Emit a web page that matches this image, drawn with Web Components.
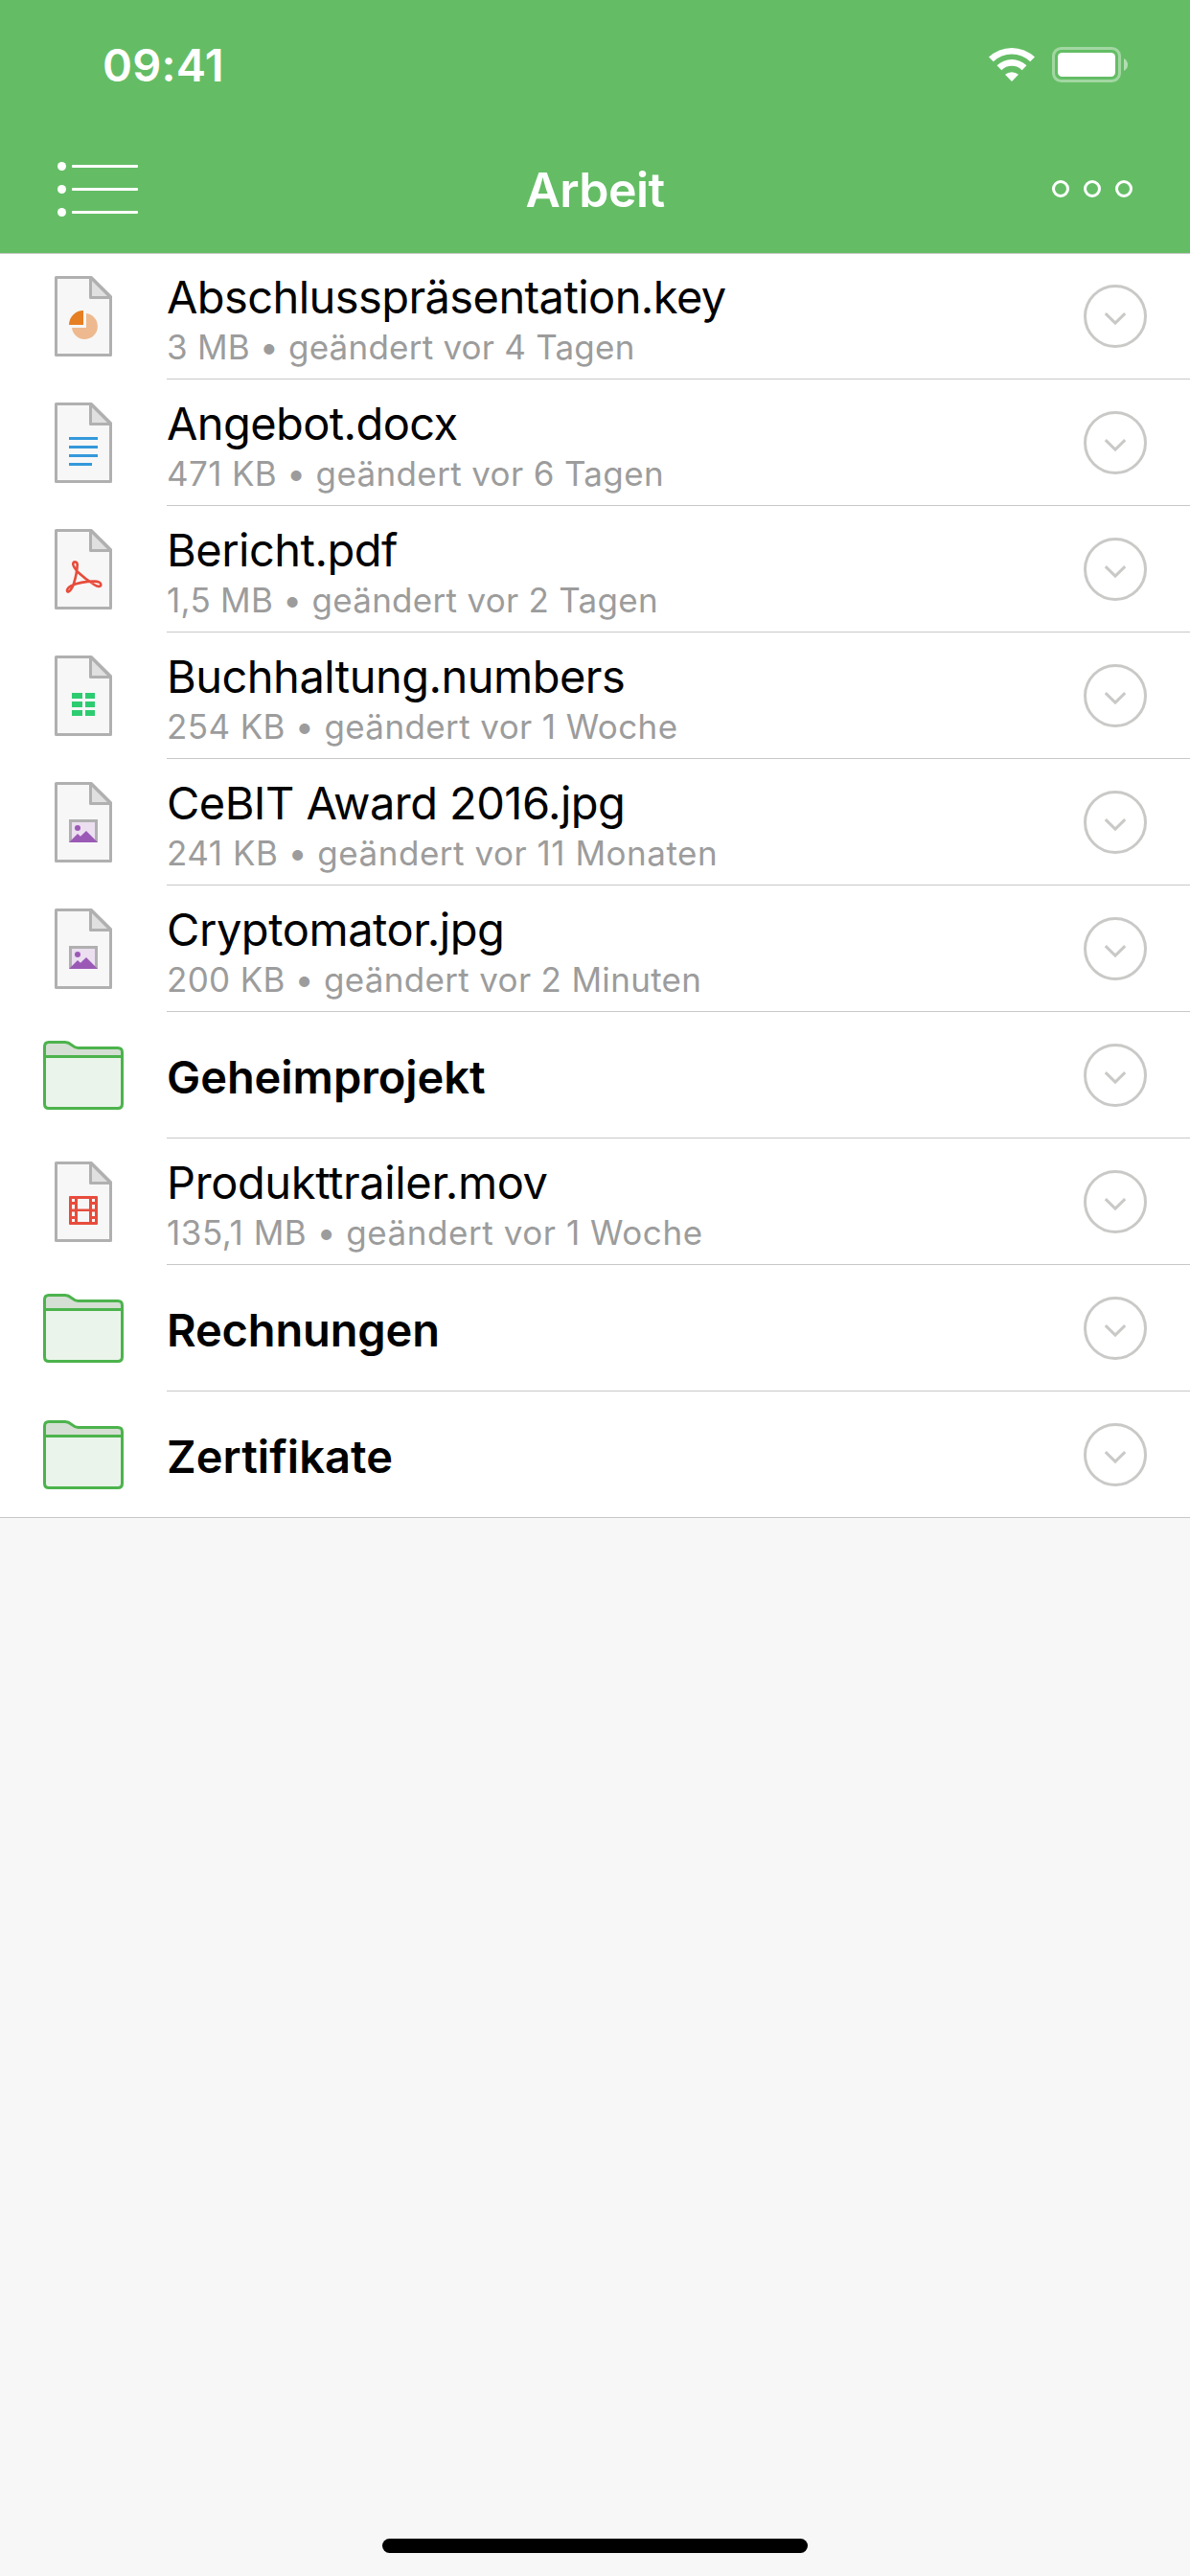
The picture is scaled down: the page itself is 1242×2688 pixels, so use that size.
<!DOCTYPE html>
<html lang="de"><head><meta charset="utf-8"><title>Arbeit</title>
<style>
html,body{margin:0;padding:0;background:#f7f7f7}
body{font-family:Inter,"Liberation Sans",sans-serif}
</style></head><body>
<cloud-app></cloud-app>
<script>
// Registers an element whose shadow root is filled from a function of its host.
const define=(name,render)=>customElements.define(name,class extends HTMLElement{
  connectedCallback(){
    if(this.shadowRoot)return;
    this.attachShadow({mode:'open'}).innerHTML=render(this);
  }
});

const glyphs={
  key:'<path fill="#e67e22" d="M30 36V51H15A15 15 0 0 1 30 36Z"/><path fill="#eeb98e" d="M33 39A13.5 13.5 0 1 1 18 54H33Z"/>',
  doc:'<path fill="#3498db" d="M15 36h30v3H15zM15 45h30v3H15zM15 54h30v3H15zM15 63h24v3H15z"/>',
  pdf:'<path fill="none" stroke="#e74c3c" stroke-width="2.600" stroke-linejoin="round" d="M24.300 45C22 42 18.500 38.500 19.300 35.800C20.200 33.400 23.800 34.200 23.700 37.600C23.500 42 21.700 51.500 20 57C18.400 61.800 15.500 65.800 13.800 65.600C12 65 13.500 61 17 59.300C23 56.500 34 54.600 41 54.600C46 54.500 48.600 56 48.300 58.200C48 60.300 45 60.400 42 58.500C36 54.800 28.500 49 24.300 45Z"/>',
  table:'<path fill="#2ecc71" d="M18 39h11v6H18zM32 39h10v6H32zM18 48h11v6H18zM32 48h10v6H32zM18 57h11v6H18zM32 57h10v6H32z"/>',
  image:'<path fill="#b0b0b0" d="M15 39h30v24H15z"/><path fill="#ebdff0" d="M18 42h24v21H18z"/><circle cx="24" cy="48" r="3" fill="#9b59b6"/><path fill="#9b59b6" d="M15 63L24 54L27 56.700L33 51L45 63Z"/>',
  film:'<rect x="15" y="36" width="30" height="30" rx="1" fill="#e74c3c"/><path fill="#f7f7f7" d="M18 39h3v3h-3zM18 45h3v4.500h-3zM18 52.500h3v4.500h-3zM18 60h3v3h-3zM39 39h3v3h-3zM39 45h3v4.500h-3zM39 52.500h3v4.500h-3zM39 60h3v3h-3zM24 39h12v10.500H24zM24 52h12v11H24z"/>'
};

define('file-icon',host=>{
  const k=host.getAttribute('kind');
  return `<style>:host{display:flex;width:84px;justify-content:center}svg{display:block}</style>`+(k==='folder'
   ?`<svg width="84" height="72" viewBox="0 0 84 72"><path fill="#d5dfd4" d="M1.500 16.500V6Q1.500 1.500 6 1.500H23C29.500 1.500 30.500 7.500 36.500 7.500H78Q82.500 7.500 82.500 12V16.500Z"/><path fill="#eaf4ea" d="M1.500 16.500H82.500V66Q82.500 70.500 78 70.500H6Q1.500 70.500 1.500 66Z"/><path fill="none" stroke="#4cb34c" stroke-width="3" d="M1.500 16.500H82.500M6 1.500H23C29.500 1.500 30.500 7.500 36.500 7.500H78Q82.500 7.500 82.500 12V66Q82.500 70.500 78 70.500H6Q1.500 70.500 1.500 66V6Q1.500 1.500 6 1.500Z"/></svg>`
   :`<svg width="60" height="84" viewBox="0 0 60 84"><path fill="#f7f7f7" stroke="#b0b0b0" stroke-width="3" stroke-linejoin="round" d="M1.500 1.500H38.400L58.500 21.600V82.500H1.500Z"/><path fill="#e0e0e0" stroke="#b0b0b0" stroke-width="3" stroke-linejoin="round" d="M37.500 1.500V22.500H58.500Z"/>${glyphs[k]}</svg>`);
});

define('row-action',()=>`<style>:host{display:block;width:66px;height:66px}svg{display:block}</style>
<svg width="66" height="66" viewBox="0 0 66 66" fill="none" stroke="#c9cac7" stroke-width="3"><circle cx="33" cy="33" r="31.500"/><path d="M22.800 30.100L33 40.100L43.200 30.100"/></svg>`);

define('file-row',host=>`<style>
:host{display:flex;box-sizing:border-box;height:132px;padding-left:45px;background:#fff}
:host(:last-of-type){box-shadow:inset 0 -1px #c8c8c8}
file-icon{align-self:center;margin-right:45px}
.main{flex:1;display:flex;align-items:center;padding-right:45px;border-bottom:1px solid #c8c8c8}
.text{flex:1;display:flex;flex-direction:column;white-space:nowrap;padding-top:7px}
.name{font-size:47px;line-height:56px;color:#000;letter-spacing:var(--name-track,0)}
.meta{font-size:35px;line-height:44px;margin-top:2px;color:#9c9c9c;letter-spacing:var(--meta-track,0)}
row-action{margin-top:1px}
:host([kind=folder]) .name{font-weight:600}
:host([kind=folder]) .text{padding-top:5px}
:host([kind=folder]) .meta{display:none}
</style><file-icon kind="${host.getAttribute('kind')}"></file-icon><div class="main"><div class="text"><span class="name"><slot></slot></span><span class="meta"><slot name="meta"></slot></span></div><row-action></row-action></div>`);

define('status-bar',()=>`<style>
:host{display:flex;box-sizing:border-box;height:132px;padding:40px 64px 0 107px;justify-content:space-between;align-items:flex-start;color:#fff}
.time{font-size:47px;line-height:56px;font-weight:600;letter-spacing:.25px}
.icons{display:flex;gap:18px;padding-top:9px}
svg{display:block}
</style><span class="time">09:41</span><div class="icons">
<svg width="48" height="37" viewBox="0 0 48 37" fill="#fff"><path d="M0 10.600A34.500 34.500 0 0 1 48 10.600L43.200 15.300A27.500 27.500 0 0 0 4.800 15.300Z"/><path d="M8.500 19.300A22.300 22.300 0 0 1 39.500 19.300L34.700 24.200A15.300 15.300 0 0 0 13.300 24.200Z"/><path d="M17 28.800A10.500 10.500 0 0 1 31 28.800L24 36Z"/></svg>
<svg width="80" height="37" viewBox="0 0 80 37"><rect x="1.500" y="1.500" width="69" height="34" rx="8" fill="none" stroke="#fff" stroke-opacity=".4" stroke-width="3"/><rect x="6" y="6" width="60" height="25" rx="4.500" fill="#fff"/><path d="M75 12Q79 14.500 79 18.500T75 25Z" fill="#fff" fill-opacity=".5"/></svg></div>`);

define('nav-bar',()=>`<style>
:host{display:grid;grid-template-columns:1fr auto 1fr;align-items:center;box-sizing:border-box;height:132px;padding:0 60px 1px;color:#fff}
.title{font-size:50px;line-height:60px;font-weight:600;letter-spacing:-.55px}
svg{display:block}
.more{justify-self:end;margin-bottom:1px}
</style>
<svg width="84" height="57" viewBox="0 0 84 57" fill="#fff"><circle cx="4.500" cy="4.500" r="4.500"/><circle cx="4.500" cy="28.500" r="4.500"/><circle cx="4.500" cy="52.500" r="4.500"/><rect x="15" y="3" width="69" height="3" rx="1"/><rect x="15" y="27" width="69" height="3" rx="1"/><rect x="15" y="51" width="69" height="3" rx="1"/></svg>
<span class="title"><slot></slot></span>
<svg class="more" width="84" height="18" viewBox="0 0 84 18" fill="none" stroke="#fff" stroke-width="3"><circle cx="9" cy="9" r="7.500"/><circle cx="42" cy="9" r="7.500"/><circle cx="75" cy="9" r="7.500"/></svg>`);

define('home-indicator',()=>`<style>:host{display:flex;justify-content:center;padding-bottom:24px}div{width:444px;height:15px;border-radius:8px;background:#000}</style><div></div>`);

const row=(kind,name,nameTrack,meta,metaTrack)=>`<file-row kind="${kind}" style="--name-track:${nameTrack}px;--meta-track:${metaTrack||0}px">${name}${meta?`<span slot="meta">${meta}</span>`:''}</file-row>`;

define('cloud-app',()=>`<style>
:host{display:flex;flex-direction:column;width:1242px;height:2688px;background:#f7f7f7}
header{background:#64bd65;box-shadow:0 1px #c8c8c8;position:relative;z-index:1}
main{flex:1}
</style>
<header><status-bar></status-bar><nav-bar>Arbeit</nav-bar></header>
<main>${[
  row('key','Abschlusspräsentation.key',-.58,'3 MB • geändert vor 4 Tagen',.227),
  row('doc','Angebot.docx',-.6,'471 KB • geändert vor 6 Tagen',.364),
  row('pdf','Bericht.pdf',-.5,'1,5 MB • geändert vor 2 Tagen',.286),
  row('table','Buchhaltung.numbers',-.517,'254 KB • geändert vor 1 Woche',.39),
  row('image','CeBIT Award 2016.jpg',-.547,'241 KB • geändert vor 11 Monaten',.526),
  row('image','Cryptomator.jpg',-.44,'200 KB • geändert vor 2 Minuten',.32),
  row('folder','Geheimprojekt',-.05),
  row('film','Produkttrailer.mov',-.38,'135,1 MB • geändert vor 1 Woche',.553),
  row('folder','Rechnungen',-.15),
  row('folder','Zertifikate',.07)
].join('')}</main>
<home-indicator></home-indicator>`);
</script></body></html>
